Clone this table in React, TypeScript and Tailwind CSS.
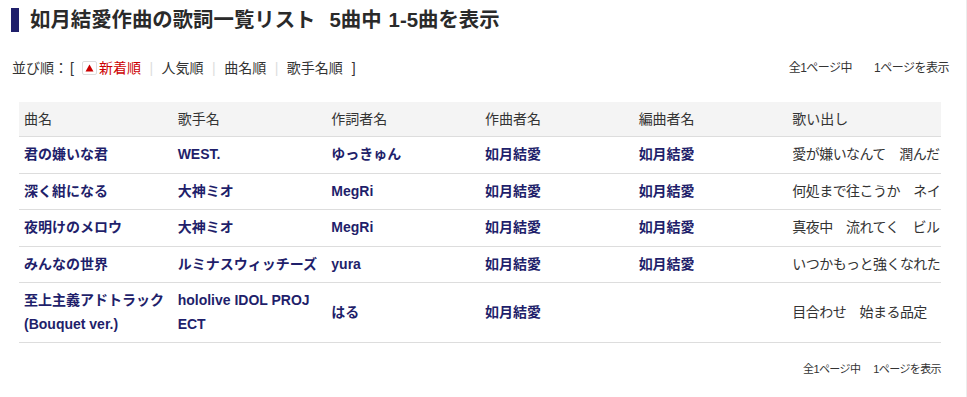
import React from "react";

const SONGS = [
  { title: "君の嫌いな君", singer: "WEST.", lyricist: "ゆっきゅん", composer: "如月結愛", arranger: "如月結愛", intro: "愛が嫌いなんて　潤んだ" },
  { title: "深く紺になる", singer: "大神ミオ", lyricist: "MegRi", composer: "如月結愛", arranger: "如月結愛", intro: "何処まで往こうか　ネイ" },
  { title: "夜明けのメロウ", singer: "大神ミオ", lyricist: "MegRi", composer: "如月結愛", arranger: "如月結愛", intro: "真夜中　流れてく　ビル" },
  { title: "みんなの世界", singer: "ルミナスウィッチーズ", lyricist: "yura", composer: "如月結愛", arranger: "如月結愛", intro: "いつかもっと強くなれた" },
  // zero-width space keeps the break where the original page wraps it
  { title: "至上主義アドトラック(Bouquet ver.)", singer: "hololive IDOL PROJ\u200BECT", lyricist: "はる", composer: "如月結愛", arranger: "", intro: "目合わせ　始まる品定" },
];

const HEADERS = ["曲名", "歌手名", "作詞者名", "作曲者名", "編曲者名", "歌い出し"];

const SORTS = ["人気順", "曲名順", "歌手名順"];

function Sep() {
  return <span className="mx-[8.5px] text-[#dddddd]">|</span>;
}

export default function App() {
  return (
    <div className="min-h-screen w-full border-r border-[#ececec] bg-white pt-[8px] font-['Liberation_Sans','Noto_Sans_CJK_JP',sans-serif] text-[#333333]">
      <div className="px-[11px]">
        <h1 className="flex h-[24px] items-center gap-[11px]">
          <span className="h-[24px] w-[8px] bg-[#1f1f6b]" />
          <span className="text-[20.4px] leading-[24px] font-bold text-[#2a2a2a]">
            如月結愛作曲の歌詞一覧リスト
            <span className="ml-[14px]">5曲中</span>
            <span className="ml-[7px]">1-5曲を表示</span>
          </span>
        </h1>

        <div className="mt-[28px] flex h-[16px] items-center justify-between leading-[16px]">
          <div className="flex items-center pl-[1px] text-[14px]">
            <span>並び順：</span>
            <span className="ml-[2px]">[</span>
            <span className="ml-[8px] flex h-[14px] w-[15px] items-center justify-center rounded-[2px] border border-[#dddddd]">
              <svg width="9" height="8" viewBox="0 0 9 8">
                <path d="M4.5 0.5 L8.5 7.5 L0.5 7.5 Z" fill="#cc0000" />
              </svg>
            </span>
            <span className="ml-[2px] text-[#cc0000]">新着順</span>
            {SORTS.map((s) => (
              <React.Fragment key={s}>
                <Sep />
                <span>{s}</span>
              </React.Fragment>
            ))}
            <span className="ml-[9px]">]</span>
          </div>
          <div className="flex pr-[6px] text-[12px] tracking-[-0.5px]">
            <span>全1ページ中</span>
            <span className="ml-[22px]">1ページを表示</span>
          </div>
        </div>

        <div className="mt-[26px] mr-[14px] ml-[8px]">
          <table className="w-full table-fixed border-collapse text-[14px]">
            <thead>
              <tr className="bg-[#f4f4f4]">
                {HEADERS.map((h) => (
                  <th key={h} className="border-b border-[#dddddd] px-[5px] py-[6px] text-left leading-[22px] font-normal text-[#333333]">
                    {h}
                  </th>
                ))}
              </tr>
            </thead>
            <tbody>
              {SONGS.map((s) => (
                <tr key={s.title} className="border-b border-[#dddddd]">
                  <td className="px-[5px] py-[6px] leading-[23.5px] font-bold text-[#1f1f6b]">{s.title}</td>
                  <td className="px-[5px] py-[6px] leading-[23.5px] font-bold text-[#1f1f6b]">{s.singer}</td>
                  <td className="px-[5px] py-[6px] leading-[23.5px] font-bold text-[#1f1f6b]">{s.lyricist}</td>
                  <td className="px-[5px] py-[6px] leading-[23.5px] font-bold text-[#1f1f6b]">{s.composer}</td>
                  <td className="px-[5px] py-[6px] leading-[23.5px] font-bold text-[#1f1f6b]">{s.arranger}</td>
                  <td className="px-[5px] py-[6px] leading-[23.5px] tracking-[-0.55px] whitespace-nowrap text-[#333333]">{s.intro}</td>
                </tr>
              ))}
            </tbody>
          </table>

          <div className="mt-[18px] flex justify-end text-[11px] leading-[16px] tracking-[-0.6px]">
            <span>全1ページ中</span>
            <span className="ml-[13px]">1ページを表示</span>
          </div>
        </div>
      </div>
    </div>
  );
}
